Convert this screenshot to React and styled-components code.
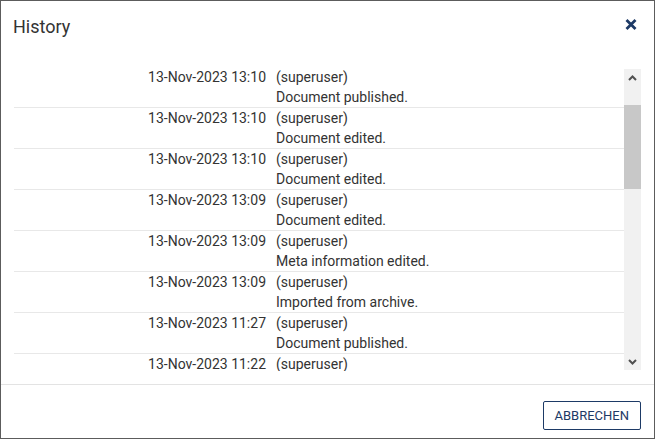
import React from "react";
import styled, { createGlobalStyle } from "styled-components";

const Global = createGlobalStyle`
  html, body { margin: 0; padding: 0; background: #fff; }
  body { font-family: Roboto, "Liberation Sans", Arial, sans-serif; }
  * { box-sizing: border-box; }
`;

const Dialog = styled.div`
  width: 655px;
  height: 439px;
  border: 1px solid #5c5c5c;
  background: #fff;
  display: flex;
  flex-direction: column;
  color: #333;
`;

const Header = styled.div`
  display: flex;
  align-items: flex-start;
  justify-content: space-between;
  padding: 14px 17px 0 12px;
  height: 66px;
`;

const Title = styled.h2`
  margin: 0;
  font-size: 18px;
  line-height: 24px;
  font-weight: 400;
  color: #333;
`;

const CloseButton = styled.button`
  border: 0;
  background: none;
  padding: 0;
  margin-top: 4px;
  width: 12px;
  height: 12px;
  display: flex;
  cursor: pointer;
`;

const Body = styled.div`
  display: flex;
  height: 304px;
  padding: 0 13px;
`;

const List = styled.div`
  flex: 1;
  overflow: hidden;
`;

const Row = styled.div`
  display: grid;
  grid-template-columns: 252px 1fr;
  column-gap: 10px;
  border-bottom: 1px solid #e8e8e8;
  font-size: 14px;
  line-height: 20px;
  min-height: 41px;
  color: #333;
`;

const DateCell = styled.div`
  text-align: right;
  white-space: nowrap;
`;

const Info = styled.div`
  display: flex;
  flex-direction: column;
`;

const Scrollbar = styled.div`
  width: 17px;
  margin: 2px 0 1px;
  background: #f1f1f1;
  display: flex;
  flex-direction: column;
`;

const ScrollBtn = styled.div`
  height: 17px;
  display: flex;
  align-items: center;
  justify-content: center;
`;

const Thumb = styled.div`
  margin-top: 19px;
  height: 84px;
  background: #c8c8c8;
`;

const Spacer = styled.div`
  flex: 1;
`;

const Footer = styled.div`
  margin-top: 13px;
  border-top: 1px solid #e3e3e3;
  display: flex;
  justify-content: flex-end;
  padding: 16px 13px 8px;
`;

const Button = styled.button`
  height: 29px;
  padding: 0 11px;
  border: 1px solid #1d3a66;
  border-radius: 2px;
  background: #fff;
  color: #1d3a66;
  font-family: Roboto, "Liberation Sans", Arial, sans-serif;
  font-size: 13px;
  font-weight: 400;
  text-transform: uppercase;
  cursor: pointer;
`;

const entries = [
  ["13-Nov-2023 13:10", "Document published."],
  ["13-Nov-2023 13:10", "Document edited."],
  ["13-Nov-2023 13:10", "Document edited."],
  ["13-Nov-2023 13:09", "Document edited."],
  ["13-Nov-2023 13:09", "Meta information edited."],
  ["13-Nov-2023 13:09", "Imported from archive."],
  ["13-Nov-2023 11:27", "Document published."],
  ["13-Nov-2023 11:22", null],
];

const Chevron = ({ up }) => (
  <svg width="9" height="6" viewBox="0 0 9 6">
    <path
      d={up ? "M1 5 L4.5 1.5 L8 5" : "M1 1 L4.5 4.5 L8 1"}
      fill="none"
      stroke="#505050"
      strokeWidth="2"
    />
  </svg>
);

export default function App() {
  return (
    <>
      <Global />
      <Dialog>
        <Header>
          <Title>History</Title>
          <CloseButton aria-label="close">
            <svg width="12" height="11" viewBox="0 0 12 11">
              <path
                d="M1.5 1 L10.5 10 M10.5 1 L1.5 10"
                stroke="#1d3a66"
                strokeWidth="2.8"
                strokeLinecap="butt"
              />
            </svg>
          </CloseButton>
        </Header>
        <Body>
          <List>
            {entries.map(([d, m], i) => (
              <Row key={i}>
                <DateCell>{d}</DateCell>
                <Info>
                  <span>(superuser)</span>
                  {m && <span>{m}</span>}
                </Info>
              </Row>
            ))}
          </List>
          <Scrollbar>
            <ScrollBtn>
              <Chevron up />
            </ScrollBtn>
            <Thumb />
            <Spacer />
            <ScrollBtn>
              <Chevron />
            </ScrollBtn>
          </Scrollbar>
        </Body>
        <Footer>
          <Button>Abbrechen</Button>
        </Footer>
      </Dialog>
    </>
  );
}
